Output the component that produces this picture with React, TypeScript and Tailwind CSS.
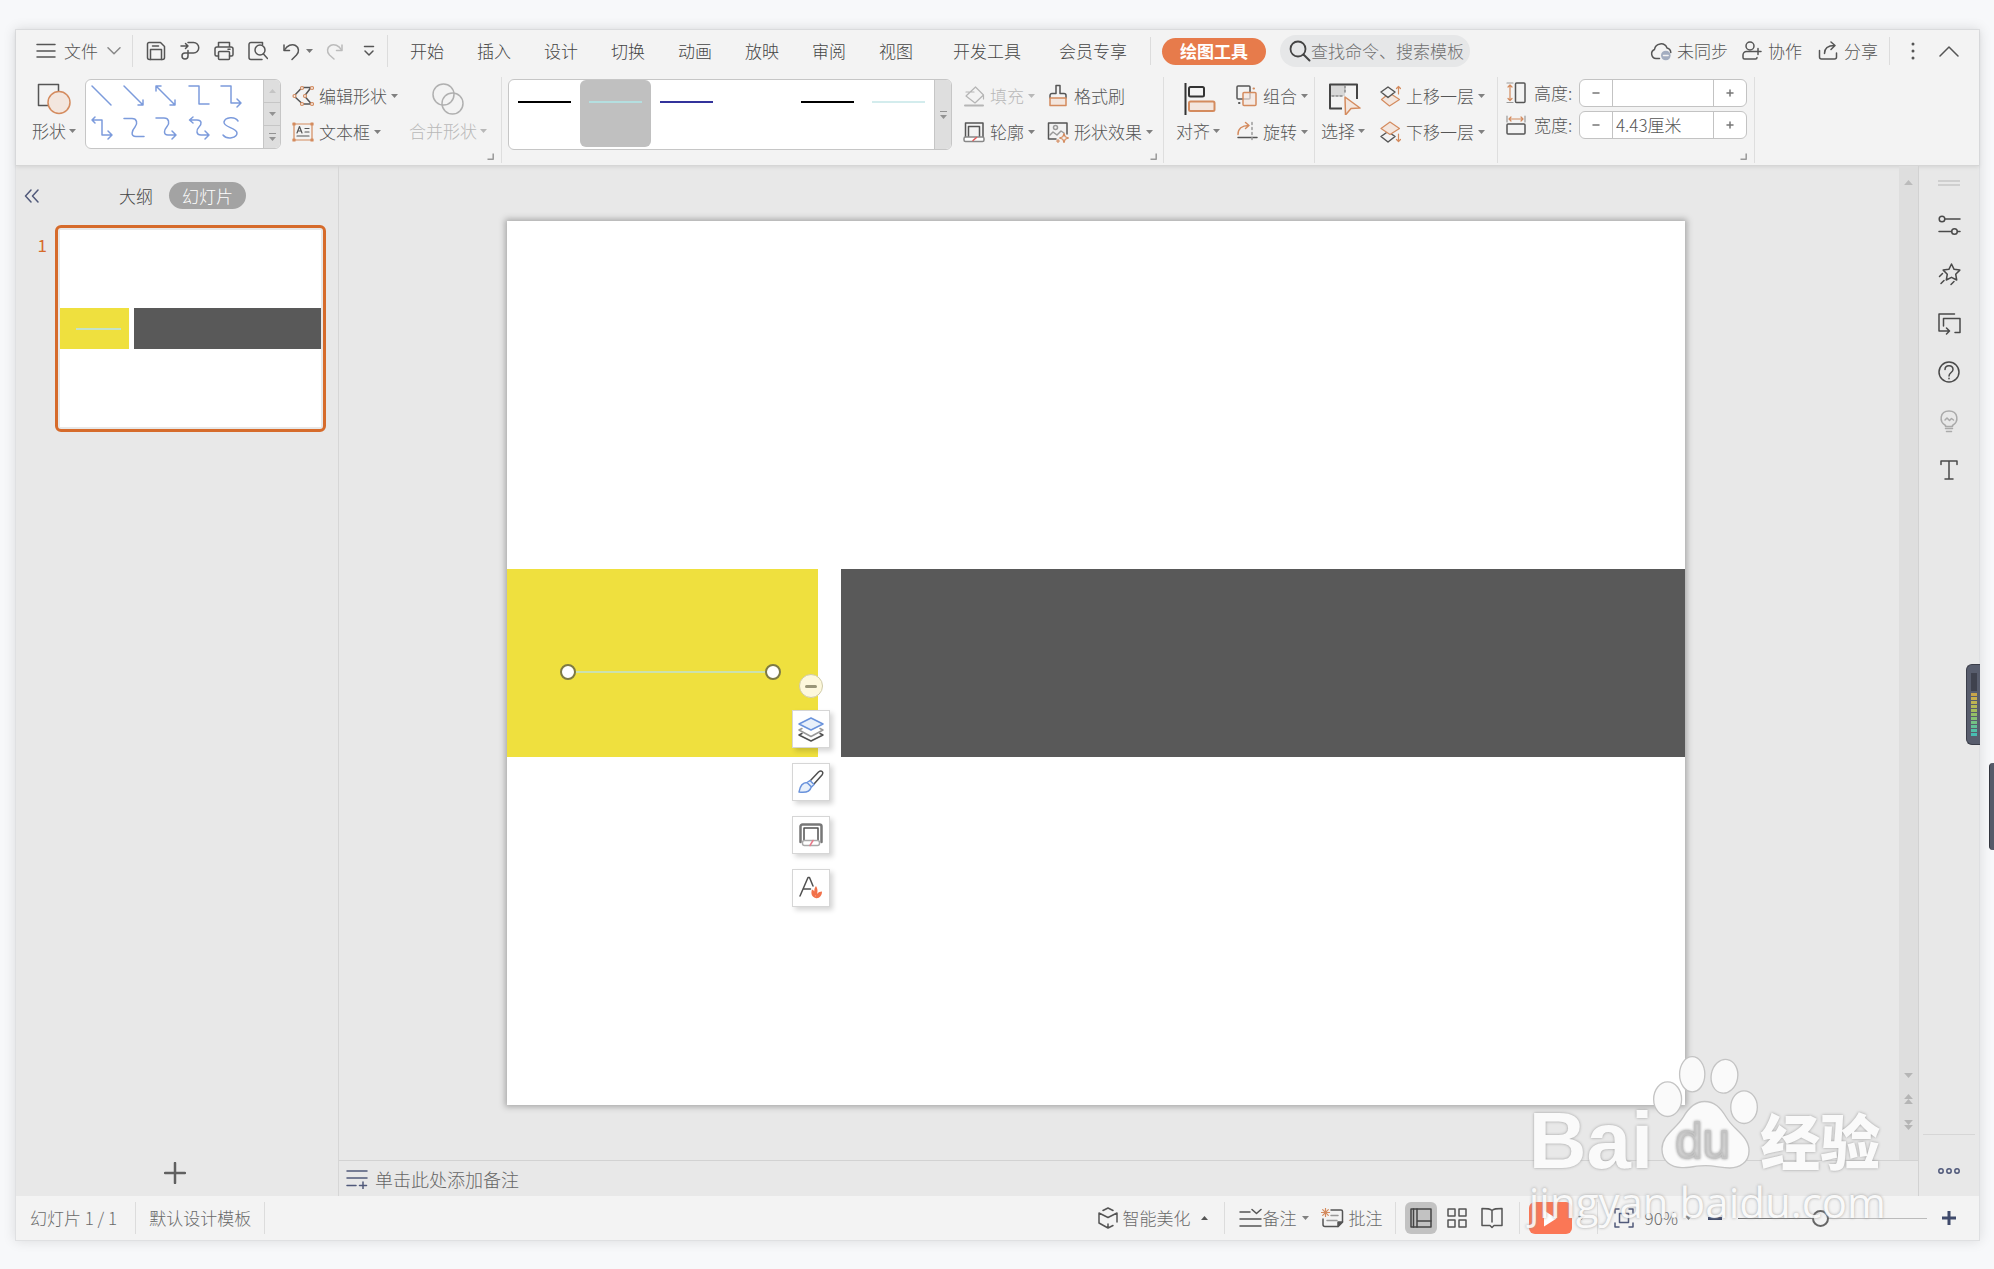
import type { ReactNode } from "react";

type IconProps = {
  w?: number;
  h?: number;
  className?: string;
  children: ReactNode;
};

function Icon({ w = 20, h = 20, className = "text-[#555]", children }: IconProps) {
  return (
    <svg
      width={w}
      height={h}
      viewBox={`0 0 ${w} ${h}`}
      fill="none"
      stroke="currentColor"
      strokeWidth="1.5"
      strokeLinecap="round"
      strokeLinejoin="round"
      className={`shrink-0 ${className}`}
      aria-hidden="true"
    >
      {children}
    </svg>
  );
}

function Caret({ className = "text-[#808080]" }: { className?: string }) {
  return (
    <svg width="7" height="4" viewBox="0 0 7 4" className={`shrink-0 ${className}`} aria-hidden="true">
      <path d="M0 0h7L3.5 4z" fill="currentColor" />
    </svg>
  );
}

function Launcher({ className }: { className: string }) {
  return (
    <button aria-label="更多设置" className={`mb-[5px] self-end ${className}`}>
      <Icon w={7} h={7} className="text-[#999]">
        <path d="M6.2 0.5v5.7H0.5" strokeLinecap="butt" />
      </Icon>
    </button>
  );
}

function RibbonDivider({ className }: { className: string }) {
  return <div className={`mt-[5px] h-[86px] w-px bg-[#dedede] ${className}`} />;
}

function SmallButton({ icon, label, caret = true, disabled = false }: { icon: ReactNode; label: string; caret?: boolean; disabled?: boolean }) {
  return (
    <button disabled={disabled} className={`flex h-9 items-center ${disabled ? "text-[#b8b8b8]" : ""}`}>
      {icon}
      <span className="ml-[5px]">{label}</span>
      {caret && <Caret className={disabled ? "ml-1 text-[#b8b8b8]" : "ml-1 text-[#808080]"} />}
    </button>
  );
}

function BigButton({ icon, label, className, disabled = false }: { icon: ReactNode; label: string; className: string; disabled?: boolean }) {
  return (
    <button disabled={disabled} className={`flex flex-col items-center gap-1 pt-[11px] ${disabled ? "text-[#b8b8b8]" : ""} ${className}`}>
      {icon}
      <span className="flex items-center gap-[3px]">
        {label}
        <Caret className={disabled ? "text-[#b8b8b8]" : "text-[#808080]"} />
      </span>
    </button>
  );
}

const quickActions = [
  {
    name: "保存",
    art: (
      <>
        <path d="M3 1.5h11.5l4 4V16.5a2 2 0 0 1-2 2h-13a2 2 0 0 1-2-2V3a1.5 1.5 0 0 1 1.5-1.5z" />
        <path d="M4.5 18.5V8.5h11v10M6.5 5h6" />
      </>
    ),
  },
  {
    name: "输出",
    art: (
      <>
        <path d="M1 5h7M5.5 2.5L8 5 5.5 7.5" />
        <path d="M8 1.5h5.5a5 5 0 0 1 0 10.5H5a3 3 0 1 0 3 3V9.5" />
      </>
    ),
  },
  {
    name: "打印",
    art: (
      <>
        <path d="M4.5 6V1.5h11V6M4.5 15H2.5a1.5 1.5 0 0 1-1.5-1.5V8a2 2 0 0 1 2-2h14a2 2 0 0 1 2 2v5.5a1.5 1.5 0 0 1-1.5 1.5h-2" />
        <rect x="4.5" y="10.5" width="11" height="8" rx="1" />
        <path d="M14 8.2h2" />
      </>
    ),
  },
  {
    name: "打印预览",
    art: (
      <>
        <path d="M14.5 3.5V1.5H3a2 2 0 0 0-2 2v13a2 2 0 0 0 2 2h11" />
        <circle cx="12" cy="9" r="5" />
        <path d="M15.5 13l4 4.5" />
      </>
    ),
  },
  {
    name: "撤销",
    art: (
      <>
        <path d="M2 4v5.5h5.5" />
        <path d="M2.5 9C5 4.5 10 2.5 13.5 4.5c3.5 2 4 6.5 1 9.5L10 18.5" />
      </>
    ),
  },
];

const tabs = ["开始", "插入", "设计", "切换", "动画", "放映", "审阅", "视图"];

function TitleBar() {
  return (
    <div className="flex h-[42px] items-center">
      <button className="ml-5 flex items-center">
        <Icon>
          <path d="M1 3.5h18M1 10h18M1 16h18" />
        </Icon>
        <span className="ml-2">文件</span>
        <Icon w={14} h={8} className="ml-[9px] text-[#888]">
          <path d="M1 0.8l6 6 6-6" />
        </Icon>
      </button>
      <div className="ml-[11px] h-8 w-px bg-[#dcdcdc]" />

      <div className="ml-[13px] flex items-center gap-[14px]">
        {quickActions.map((a) => (
          <button key={a.name} aria-label={a.name}>
            <Icon>{a.art}</Icon>
          </button>
        ))}
      </div>
      <Caret className="ml-1 text-[#777]" />
      <button aria-label="恢复" disabled className="ml-3">
        <Icon className="text-[#bbb]">
          <path d="M17 4v5.5h-5.5" />
          <path d="M16.5 9C14 4.5 9 2.5 5.5 4.5c-3.5 2-4 6.5-1 9.5L9 18" />
        </Icon>
      </button>
      <button aria-label="自定义快速访问" className="ml-[18px]">
        <Icon w={12} h={12}>
          <path d="M1.5 1.5h9M2 6l4 4 4-4" />
        </Icon>
      </button>
      <div className="ml-3 h-8 w-px bg-[#dcdcdc]" />

      <nav className="ml-[22px] flex items-center text-[#444]">
        <div className="flex gap-[33px]">
          {tabs.map((t) => (
            <button key={t}>{t}</button>
          ))}
        </div>
        <button className="ml-10">开发工具</button>
        <button className="ml-[38px]">会员专享</button>
        <div className="ml-[23px] h-7 w-px bg-[#dcdcdc]" />
        <button className="ml-[11px] h-[27px] rounded-full bg-[#e77b4b] px-[18px] font-bold text-white">绘图工具</button>
      </nav>

      <label className="ml-[14px] flex h-8 w-[190px] items-center rounded-full bg-[#e6e7e8] pl-[9px]">
        <Icon w={22} h={22} className="text-[#444]">
          <circle cx="9" cy="9" r="7.5" strokeWidth="1.8" />
          <path d="M14.5 14.5l6 6" strokeWidth="2" />
        </Icon>
        <input aria-label="查找命令" placeholder="查找命令、搜索模板" className="w-full min-w-0 bg-transparent outline-none placeholder:text-[#707070]" />
      </label>

      <div className="ml-auto flex items-center pr-5">
        <button className="flex items-center">
          <Icon w={22} h={20}>
            <path d="M9.5 17.5H6a4.7 4.7 0 0 1-1.5-9A6.5 6.5 0 0 1 17 7a5 5 0 0 1 3.8 4.5" />
            <circle cx="15.8" cy="14.5" r="4.8" fill="#a3adc0" stroke="none" />
            <path d="M13.5 14.5h4.6" stroke="#f3f3f3" />
          </Icon>
          <span className="ml-[5px]">未同步</span>
        </button>
        <button className="ml-[14px] flex items-center">
          <Icon>
            <circle cx="8" cy="5" r="4" />
            <path d="M13 10.5H4.5A3.5 3.5 0 0 0 1 14v2.5a1.5 1.5 0 0 0 1.5 1.5h11a1.5 1.5 0 0 0 1.5-1.5M16 7.5v6M13 10.5h6" />
          </Icon>
          <span className="ml-[6px]">协作</span>
        </button>
        <button className="ml-4 flex items-center">
          <Icon>
            <path d="M1.5 9.5V16a2 2 0 0 0 2 2h13a2 2 0 0 0 2-2v-4" />
            <path d="M6.5 12.5c0-5 3-8 10-8M13 1l4 3.5-4 4" />
          </Icon>
          <span className="ml-[6px]">分享</span>
        </button>
        <div className="ml-[11px] h-7 w-px bg-[#dcdcdc]" />
        <button aria-label="更多" className="ml-[21px]">
          <Icon w={4} h={20}>
            <g fill="currentColor" stroke="none">
              <circle cx="2" cy="3" r="1.5" />
              <circle cx="2" cy="10" r="1.5" />
              <circle cx="2" cy="17" r="1.5" />
            </g>
          </Icon>
        </button>
        <button aria-label="收起功能区" className="ml-6">
          <Icon w={20} h={12}>
            <path d="M1 11l9-9 9 9" />
          </Icon>
        </button>
      </div>
    </div>
  );
}

const connectors = [
  { name: "直线", d: "M1 1l19 19" },
  { name: "箭头", d: "M1 1l19 19M20 15v5h-5" },
  { name: "双箭头", d: "M1 1l19 19M20 15v5h-5M1 6V1h5" },
  { name: "肘形连接符", d: "M1 1h10v18h10" },
  { name: "肘形箭头", d: "M1 1h10v17h9M17 14l4 4-4 4" },
  { name: "肘形双箭头", d: "M1 3h10v15h9M17 14l4 4-4 4M4 0L1 3l3 3" },
  { name: "曲线", d: "M1 1.5h8c5 0 6 5 3 8.5S7 19.5 13 19.5h8" },
  { name: "曲线箭头", d: "M1 1h8c5 0 6 5 3 8.5S8 18 13 18h7M17 14l4 4-4 4" },
  { name: "曲线双箭头", d: "M2 3h7c5 0 5 4 2 7s-3 8 2 8h7M17 14l4 4-4 4M5 0L1.500 3 5 6" },
  { name: "自由曲线", d: "M18 4C15-1 5 0 4 5s13 6 13 11S7 23 3 18" },
];

const lineStyles = [
  { name: "黑色", line: "bg-black" },
  { name: "浅青", line: "bg-[#b4dfe0]", selected: true },
  { name: "蓝色", line: "bg-[#33339b]" },
  { name: "白色", line: "bg-white" },
  { name: "黑色细线", line: "bg-black" },
  { name: "淡青", line: "bg-[#d3eced]" },
];

const orange = "#d48b5e";
const peach = "#f3e6de";

function SizeField({ id, label, value, icon }: { id: string; label: string; value: string; icon: ReactNode }) {
  return (
    <div className="flex h-7 items-center">
      {icon}
      <label htmlFor={id} className="ml-2 w-[45px]">
        {label}
      </label>
      <div className="flex h-7 w-[168px] overflow-hidden rounded-md border border-[#c3c3c3] bg-white">
        <button aria-label="减小" className="flex w-8 items-center justify-center">
          <Icon w={8} h={8} className="text-[#777]">
            <path d="M1 4h6" />
          </Icon>
        </button>
        <input id={id} defaultValue={value} className="w-0 flex-1 border-x border-[#c3c3c3] px-[3px] outline-none" />
        <button aria-label="增大" className="flex w-8 items-center justify-center">
          <Icon w={8} h={8} className="text-[#777]">
            <path d="M1 4h6M4 1v6" />
          </Icon>
        </button>
      </div>
    </div>
  );
}

function Ribbon() {
  return (
    <div className="flex h-[93px] items-start">
      <BigButton
        label="形状"
        className="ml-4"
        icon={
          <Icon w={34} h={32}>
            <rect x="1.5" y="1.5" width="20" height="21" />
            <circle cx="22" cy="19.5" r="11" fill={peach} stroke={orange} />
          </Icon>
        }
      />
      <div className="mt-[7px] ml-[9px] flex h-[70px] w-[196px] overflow-hidden rounded-md border border-[#c6c6c6] bg-white">
        <div className="grid flex-1 grid-cols-5 place-items-center pr-4 pb-1 text-[#7c9bdc]">
          {connectors.map((c) => (
            <button key={c.name} aria-label={c.name}>
              <Icon w={22} h={22} className="overflow-visible">
                <path d={c.d} />
              </Icon>
            </button>
          ))}
        </div>
        <div className="flex w-[17px] flex-col divide-y divide-[#c6c6c6] border-l border-[#c6c6c6] bg-[#dedede]">
          <button aria-label="上一行" className="flex flex-1 items-center justify-center">
            <Caret className="rotate-180 text-[#c4c4c4]" />
          </button>
          <button aria-label="下一行" className="flex flex-1 items-center justify-center">
            <Caret className="text-[#929292]" />
          </button>
          <button aria-label="全部形状" className="flex flex-1 flex-col items-center justify-center gap-[3px]">
            <span className="h-px w-[7px] bg-[#929292]" />
            <Caret className="text-[#929292]" />
          </button>
        </div>
      </div>
      <div className="mt-[6px] ml-[11px] flex flex-col">
        <SmallButton
          label="编辑形状"
          icon={
            <Icon w={22} h={22}>
              <path d="M10 2.5h9l-6.5 8.5 7 8h-9L2 11z" />
              <g stroke={orange} fill="#f3f3f3" strokeWidth="1.2">
                <circle cx="10" cy="3" r="1.5" />
                <circle cx="20" cy="3" r="1.5" />
                <circle cx="2.5" cy="11" r="1.5" />
                <circle cx="13" cy="11" r="1.5" />
                <circle cx="10" cy="19" r="1.5" />
                <circle cx="20" cy="19" r="1.5" />
              </g>
            </Icon>
          }
        />
        <SmallButton
          label="文本框"
          icon={
            <Icon w={22} h={20}>
              <g stroke={orange} strokeWidth="1.2">
                <rect x="2" y="2" width="18" height="16" />
                <path d="M1 1h2v2H1zM19 1h2v2h-2zM1 17h2v2H1zM19 17h2v2h-2z" fill={orange} />
              </g>
              <path d="M5 11l2.500-6.500L10 11M6 9h3M13 6.500h4M13 10h4M5 14h12" strokeWidth="1.2" />
            </Icon>
          }
        />
      </div>
      <BigButton
        label="合并形状"
        disabled
        className="ml-[11px]"
        icon={
          <Icon w={32} h={32} className="text-[#b0b0b0]">
            <circle cx="11.5" cy="11.5" r="10.5" />
            <circle cx="20.5" cy="20.5" r="10.5" />
          </Icon>
        }
      />
      <Launcher className="" />
      <RibbonDivider className="ml-[7px]" />

      <div className="mt-[7px] ml-[6px] flex h-[71px] w-[444px] overflow-hidden rounded-md border border-[#c6c6c6] bg-white">
        <div className="grid flex-1 grid-cols-6">
          {lineStyles.map((s) => (
            <button
              key={s.name}
              aria-label={s.name}
              className={s.selected ? "mb-[2px] flex justify-center rounded-md bg-[#c0c0c0] pt-[21px]" : "mb-[2px] flex justify-center pt-[21px]"}
            >
              <span className={`h-[2px] w-[53px] ${s.line}`} />
            </button>
          ))}
        </div>
        <button aria-label="全部样式" className="flex w-[17px] flex-col items-center justify-center gap-[3px] border-l border-[#c6c6c6] bg-[#dedede]">
          <span className="h-px w-[7px] bg-[#929292]" />
          <Caret className="text-[#929292]" />
        </button>
      </div>
      <div className="mt-[6px] ml-[11px] flex gap-3">
        <div className="flex flex-col">
          <SmallButton
            label="填充"
            disabled
            icon={
              <Icon w={22} h={22} className="text-[#b5b5b5]">
                <path d="M3 11L12.500 2l8 8-8.500 8-9-7zM20.500 10v4M3 7h8" strokeWidth="1.2" />
                <path d="M2 20.500h18" strokeWidth="2" />
              </Icon>
            }
          />
          <SmallButton
            label="轮廓"
            icon={
              <Icon w={22} h={22}>
                <path d="M2.500 16V2h17.500v14M5.500 16V5.500h11V16" />
                <rect x="1" y="16" width="20" height="4.5" rx="1.5" stroke="#888" fill="#fff" />
                <path d="M10 19.500l3.500-3" stroke="#e05a5a" />
              </Icon>
            }
          />
        </div>
        <div className="flex flex-col">
          <SmallButton
            label="格式刷"
            caret={false}
            icon={
              <Icon w={22} h={24}>
                <path d="M3 14v-2.500a2 2 0 0 1 2-2h4V1.500h4v8h4a2 2 0 0 1 2 2V14" />
                <path d="M3 14h16v7.500H3z" fill={peach} stroke={orange} />
              </Icon>
            }
          />
          <SmallButton
            label="形状效果"
            icon={
              <Icon w={22} h={22}>
                <path d="M9 18H1.500V2h18.500v11" />
                <circle cx="8.5" cy="6.5" r="2" stroke="#999" />
                <path d="M3 14l3-3 4 3 4-4 3 2" stroke="#999" />
                <path d="M17 12.500l1.200 3.300 3.300 1.200-3.300 1.200L17 21.500l-1.200-3.300-3.300-1.200 3.300-1.200z" stroke={orange} strokeWidth="1.2" fill="#f3f3f3" />
                <path d="M11 18.500v3M9.500 20h3" stroke={orange} strokeWidth="1.2" />
              </Icon>
            }
          />
        </div>
      </div>
      <Launcher className="-ml-[3px]" />
      <RibbonDivider className="ml-[6px]" />

      <BigButton
        label="对齐"
        className="ml-3"
        icon={
          <Icon w={32} h={32} className="ml-1 text-[#333]">
            <path d="M1.500 0v32" strokeWidth="2" />
            <rect x="5" y="4" width="15" height="9.5" rx="1.5" strokeWidth="2" />
            <rect x="5" y="18.5" width="25.5" height="9.5" rx="1.5" stroke={orange} fill={peach} strokeWidth="2" />
          </Icon>
        }
      />
      <div className="mt-[6px] ml-4 flex flex-col">
        <SmallButton
          label="组合"
          icon={
            <Icon w={22} h={22}>
              <rect x="1" y="1" width="13" height="13" rx="1" />
              <rect x="7" y="7.5" width="13" height="13" rx="1" stroke={orange} fill={peach} fillOpacity="0.7" />
              <path d="M17.500 3.500h.5" stroke={orange} strokeWidth="2" />
              <path d="M3 18h.5" strokeWidth="2" />
            </Icon>
          }
        />
        <SmallButton
          label="旋转"
          icon={
            <Icon w={22} h={22}>
              <path d="M2 13.500C2 8 6 4.500 12.500 4.500M9.500 1.500l3.500 3-3.500 3" stroke={orange} />
              <path d="M2 16.500h19" />
              <path d="M16 1.500v19" strokeDasharray="2 3" stroke="#999" />
            </Icon>
          }
        />
      </div>
      <RibbonDivider className="ml-[6px]" />

      <BigButton
        label="选择"
        className="ml-[6px]"
        icon={
          <Icon w={34} h={32} className="ml-1 text-[#444]">
            <path d="M2 2h15v11H2z" fill="#d8d8d8" stroke="none" />
            <path d="M29 16V1.500H2v24h12" strokeWidth="2" strokeLinecap="butt" />
            <path d="M4 13h10M17 3v8" strokeDasharray="2 2" stroke="#888" />
            <path d="M17 14l15 11-9 .5L17.500 32z" fill={peach} stroke={orange} />
          </Icon>
        }
      />
      <div className="mt-[6px] ml-[14px] flex flex-col">
        <SmallButton
          label="上移一层"
          icon={
            <Icon w={22} h={22}>
              <path d="M2.500 14.500L10.500 8l10 6.500-10 6.500z" fill={peach} stroke={orange} strokeWidth="1.2" />
              <path d="M2 7l7-5 7 5-7 5.500z" fill="#f3f3f3" />
              <path d="M19.500 9V1.500M17.500 3.500l2-2 2 2" stroke={orange} strokeWidth="1.2" />
            </Icon>
          }
        />
        <SmallButton
          label="下移一层"
          icon={
            <Icon w={22} h={22}>
              <path d="M2 15.500l7-5 7 5-7 5.500z" />
              <path d="M2 7.500L11 1l9.500 6.500-9.500 6z" fill={peach} stroke={orange} strokeWidth="1.2" />
              <path d="M19.500 13v7.500M17.500 18.500l2 2 2-2" stroke={orange} strokeWidth="1.2" />
            </Icon>
          }
        />
      </div>
      <RibbonDivider className="ml-3" />

      <div className="mt-[7px] ml-2 flex flex-col gap-1">
        <SizeField
          id="shape-height"
          label="高度:"
          value=""
          icon={
            <Icon w={20} h={22}>
              <rect x="9.5" y="1" width="9.5" height="19.5" rx="1" />
              <path d="M4 3v15M2 5l2-2 2 2M2 16.500l2 2 2-2" stroke={orange} strokeWidth="1.2" />
              <path d="M1 1h6M1 20.500h6" stroke="#999" strokeWidth="1.2" />
            </Icon>
          }
        />
        <SizeField
          id="shape-width"
          label="宽度:"
          value="4.43厘米"
          icon={
            <Icon w={20} h={20}>
              <rect x="1" y="9" width="18" height="10" rx="1" />
              <path d="M3 4h14M5 2L3 4l2 2M15 2l2 2-2 2" stroke={orange} strokeWidth="1.2" />
              <path d="M1 1v6M19 1v6" stroke="#999" strokeWidth="1.2" />
            </Icon>
          }
        />
      </div>
      <Launcher className="-ml-[7px]" />
      <RibbonDivider className="ml-[7px]" />
    </div>
  );
}

function SlidePanel() {
  return (
    <aside className="flex w-[323px] shrink-0 flex-col border-r border-[#d6d6d6]">
      <div className="mt-4 flex h-[27px] items-center">
        <button aria-label="收起" className="ml-2">
          <Icon w={16} h={14} className="text-[#50597a]">
            <path d="M7 1L1.500 7 7 13M14 1L8.500 7l5.500 6" />
          </Icon>
        </button>
        <button className="ml-[79px] text-[#444]">大纲</button>
        <button className="ml-4 h-[27px] rounded-full bg-[#a3a3a3] px-[13px] text-white">幻灯片</button>
      </div>
      <div className="mt-4 flex pr-3">
        <span className="w-[39px] pt-2 pr-2 text-right font-normal text-[#d66b2b]">1</span>
        <button aria-label="幻灯片 1" className="flex h-[207px] flex-1 rounded-md border-[3px] border-[#d66b2b] bg-[#e8e8e8] p-[2px]">
          <span className="flex h-full w-full items-center bg-white">
            <span className="flex h-[41px] w-full justify-between">
              <span className="flex w-[26.4%] items-center justify-center bg-[#efe03e] pl-2">
                <span className="h-[2px] w-[45px] bg-[#c4e2c8]" />
              </span>
              <span className="w-[71.6%] bg-[#595959]" />
            </span>
          </span>
        </button>
      </div>
      <button aria-label="新建幻灯片" className="mt-auto mb-3 self-center pr-1">
        <Icon w={22} h={22} className="text-[#606060]">
          <path d="M1 11h20M11 1v20" strokeWidth="2.5" />
        </Icon>
      </button>
    </aside>
  );
}

const floatTools = [
  {
    name: "叠放层次",
    art: (
      <>
        <path d="M4 12.500L1 14l12 6.500L25 14l-3-1.500" stroke="#999" />
        <path d="M4 17.500L1 19l12 6 12-6-3-1.500" />
        <path d="M1 8l12-6 12 6-12 6z" fill="#e8f0fa" stroke="#6a93dc" />
      </>
    ),
  },
  {
    name: "形状样式",
    art: (
      <>
        <path d="M12.500 11.500l8-8.500c3-2.500 5.500 0 3.500 3l-8 9" />
        <path d="M1 23c1-6 4-9.500 8-9.500l3-2 4 4-3 3c-1 4-5 5.500-12 4.500zM9 13.500l4.500 4.500" fill="#e8f0fa" stroke="#6a93dc" />
      </>
    ),
  },
  {
    name: "形状轮廓",
    art: (
      <>
        <path d="M2.500 20V4.500a2 2 0 0 1 2-2h17a2 2 0 0 1 2 2V20" stroke="#777" strokeWidth="2.5" />
        <path d="M6 18V6h14v12" />
        <rect x="4.5" y="18.5" width="17" height="5" rx="2" stroke="#aaa" />
        <path d="M12 23.500l3-5" stroke="#e87a8a" />
      </>
    ),
  },
  {
    name: "文字美化",
    art: (
      <>
        <path d="M2 21L10 2.500h1.500L15 11M5.500 14h7" />
        <path d="M14 14.500c2.500 1 4 4 3.500 8.500-3.500-1-5-4.500-3.500-8.500zM18 11c2.500 4 1.500 8 0 10-2-3-2.500-7 0-10zM24 16.500c0 4.500-3 7.500-6.500 6.500 0-3 2.500-6.500 6.500-6.500z" fill="#f2714a" stroke="none" />
      </>
    ),
  },
];

function Canvas() {
  return (
    <main className="flex h-full min-w-0 flex-1 justify-center py-[55px] pr-[46px]">
      <div className="relative flex aspect-[4/3] h-full items-center bg-white shadow-[0_0_6px_2px_#a8a8a8]">
        <div className="flex h-[21.2%] w-full justify-between">
          <div className="w-[26.4%] bg-[#efe03e]" />
          <div className="w-[71.6%] bg-[#595959]" />
        </div>
        {/* selected line with its end handles */}
        <div className="absolute top-[50.1%] left-[4.5%] flex h-4 w-[18.8%] items-center">
          <span className="size-4 rounded-full border-2 border-[#7d7a45] bg-white" />
          <span className="h-[2px] flex-1 bg-[#cbe1ae]" />
          <span className="size-4 rounded-full border-2 border-[#7d7a45] bg-white" />
        </div>
        <div className="absolute top-[51.3%] left-[24.2%] flex flex-col items-center">
          <button aria-label="收起工具" className="mb-3 flex size-6 items-center justify-center rounded-full border border-[#cfcaa8] bg-[#fdf8dc]">
            <span className="h-[3px] w-3 rounded-full bg-[#9a9678]" />
          </button>
          <div className="flex flex-col gap-[15px]">
            {floatTools.map((t) => (
              <button key={t.name} aria-label={t.name} className="flex size-[38px] items-center justify-center border border-[#d6d6d6] bg-white shadow-[3px_3px_5px_#0000002b]">
                <Icon w={26} h={26} className="text-[#505050]">
                  {t.art}
                </Icon>
              </button>
            ))}
          </div>
        </div>
      </div>
    </main>
  );
}

function ScrollTrack() {
  return (
    <div className="flex w-5 flex-col items-center border-r border-[#d2d2d2] bg-[#dedede] pt-[14px] pb-[30px]">
      <Caret className="h-[5px] w-[9px] rotate-180 text-[#bbb]" />
      <div className="mt-auto flex flex-col items-center gap-4">
        <Caret className="h-[5px] w-[9px] text-[#b5b5b5]" />
        <div className="flex flex-col">
          <Caret className="h-[5px] w-[9px] rotate-180 text-[#b5b5b5]" />
          <Caret className="h-[5px] w-[9px] rotate-180 text-[#b5b5b5]" />
        </div>
        <div className="flex flex-col">
          <Caret className="h-[5px] w-[9px] text-[#b5b5b5]" />
          <Caret className="h-[5px] w-[9px] text-[#b5b5b5]" />
        </div>
      </div>
    </div>
  );
}

const sideTools = [
  {
    name: "属性",
    art: (
      <>
        <circle cx="4" cy="5" r="2.8" />
        <path d="M7 5h15M1 17.500h12.500M19.500 17.500H22" />
        <circle cx="16.5" cy="17.5" r="2.8" />
      </>
    ),
  },
  {
    name: "动画",
    art: (
      <>
        <path d="M13.500 1l2.600 5.300 5.700.8-4.100 4.100 1 5.800-5.200-2.700-5.200 2.700 1-5.800L5.200 7.100l5.700-.8z" />
        <path d="M4.500 10.500L1.500 13.500M6 17.500l-3 3M16 18.500l-3 3" />
      </>
    ),
  },
  {
    name: "切换",
    art: (
      <>
        <path d="M16.500 2H1v17h10M8.500 16l3 3-3 3" />
        <path d="M5.500 14V6.500H22V20.500h-5" />
      </>
    ),
  },
  {
    name: "帮助",
    art: (
      <>
        <circle cx="11" cy="11" r="10" />
        <path d="M7 8.500c0-5 8-5 8 0 0 3-4 3-4 6.500M11 17.200v.6" />
      </>
    ),
  },
  {
    name: "提示",
    dim: true,
    art: (
      <>
        <path d="M7.500 16.500v-1C1 12 1.500 1 11 1s10 11 3.500 14.500v1z" />
        <path d="M7 10l2-2 2.500 2.500 2-2 2 1.500M7.500 18.500h7M8.500 21.500h5" />
      </>
    ),
  },
  {
    name: "文字",
    art: <path d="M3 5.500V2h16v3.500M11 2v18M7 20h8" />,
  },
];

function SideBar() {
  return (
    <aside className="flex w-[60px] shrink-0 flex-col items-center">
      <div className="mt-[14px] h-[6px] w-[22px] border-y-2 border-[#cfcfcf]" />
      <div className="mt-7 flex flex-col gap-[26px]">
        {sideTools.map((t) => (
          <button key={t.name} aria-label={t.name}>
            <Icon w={23} h={23} className={t.dim ? "text-[#aaa]" : "text-[#4a4a4a]"}>
              {t.art}
            </Icon>
          </button>
        ))}
      </div>
      <div className="mt-auto h-px w-[52px] bg-[#d6d6d6]" />
      <button aria-label="更多面板" className="mt-8 mb-[21px]">
        <Icon w={24} h={8} className="text-[#50597a]">
          <circle cx="4" cy="4" r="2.2" />
          <circle cx="12" cy="4" r="2.2" />
          <circle cx="20" cy="4" r="2.2" />
        </Icon>
      </button>
    </aside>
  );
}

function StatusBar() {
  return (
    <footer className="flex h-11 shrink-0 items-center bg-[#f3f3f3] text-[#6a6a6a]">
      <span className="ml-[14px]">幻灯片 1 / 1</span>
      <div className="ml-[18px] h-8 w-px bg-[#dcdcdc]" />
      <span className="ml-[13px]">默认设计模板</span>
      <div className="ml-[13px] h-8 w-px bg-[#dcdcdc]" />

      <div className="ml-auto flex items-center pr-[23px]">
        <button className="flex items-center">
          <Icon w={20} h={22}>
            <path d="M5 3.500L10 1l5 2.500M1 6v10l9 5 5-2.500M1 6l9 4.500L19 6v9M10 21v-4" />
          </Icon>
          <span className="ml-[5px]">智能美化</span>
          <Caret className="ml-[10px] rotate-180 text-[#555]" />
        </button>
        <div className="ml-4 h-8 w-px bg-[#dcdcdc]" />
        <button className="ml-[14px] flex items-center">
          <Icon w={23} h={20}>
            <path d="M1 4h10M1 11h21M1 18h21M13 1.500l4.500 4L22 1.500" />
          </Icon>
          <span className="ml-px">备注</span>
          <Caret className="ml-[5px] text-[#808080]" />
        </button>
        <button className="ml-3 flex items-center">
          <Icon w={23} h={20}>
            <path d="M10 2h10a1.500 1.500 0 0 1 1.500 1.500V14L17 18.500H4a2 2 0 0 1-2-2V11" />
            <path d="M17 18.500V14h4.500z" fill="currentColor" />
            <path d="M10 7.500h7M6 12.500h10" stroke="#999" />
            <path d="M4.500 0.500v8M0.500 4.500h8M1.700 1.700l5.600 5.600M7.300 1.700L1.700 7.300" stroke={orange} strokeWidth="1.2" />
          </Icon>
          <span className="ml-[5px]">批注</span>
        </button>
        <div className="ml-3 h-8 w-px bg-[#dcdcdc]" />
        <button aria-label="普通视图" className="ml-[9px] flex size-8 items-center justify-center rounded-md bg-[#c2c2c2]">
          <Icon w={22} h={20} className="text-[#444]">
            <rect x="1" y="1" width="20" height="18" />
            <path d="M7 1v18M7 13h14M3.500 1v18" />
          </Icon>
        </button>
        <button aria-label="幻灯片浏览" className="ml-[10px]">
          <Icon>
            <path d="M1 1h7v7H1zM12 1h7v7h-7zM1 12h7v7H1zM12 12h7v7h-7z" />
          </Icon>
        </button>
        <button aria-label="阅读视图" className="ml-[14px]">
          <Icon w={22} h={22}>
            <path d="M11 3.500C9 1.500 7 1.500 1 1.500V18.500h8l2 2 2-2h8V1.500c-6 0-8 0-10 2zM11 3.500V15" />
          </Icon>
        </button>
        <div className="ml-4 h-8 w-px bg-[#dcdcdc]" />
        <button aria-label="放映" className="ml-[9px] flex h-8 w-[43px] items-center justify-center rounded-md bg-[#fb7756]">
          <svg width="14" height="17" viewBox="0 0 14 17" aria-hidden="true">
            <path d="M1 0.500l12.500 8-12.500 8z" fill="#fff" />
          </svg>
        </button>
        <Caret className="ml-[6px] text-[#808080]" />
        <div className="ml-3 h-8 w-px bg-[#dcdcdc]" />
        <button aria-label="适应窗口" className="ml-4">
          <Icon className="text-[#50597a]">
            <path d="M1 5V1h4M15 1h4v4M19 15v4h-4M5 19H1v-4" />
            <rect x="5.500" y="5.500" width="9" height="9" />
          </Icon>
        </button>
        <button className="ml-[11px] flex items-center">
          90%
          <Caret className="ml-[7px] text-[#808080]" />
        </button>
        <button aria-label="缩小" className="ml-4 h-[3px] w-[14px] bg-[#3f4a6b]" />
        <div className="ml-4 flex w-[189px] items-center">
          <input
            type="range"
            aria-label="缩放"
            min="0"
            max="100"
            defaultValue="43"
            className="h-px w-full appearance-none bg-linear-to-r from-[#777] from-43% to-[#bbb] to-43% [&::-webkit-slider-thumb]:size-[17px] [&::-webkit-slider-thumb]:appearance-none [&::-webkit-slider-thumb]:rounded-full [&::-webkit-slider-thumb]:border-2 [&::-webkit-slider-thumb]:border-[#666] [&::-webkit-slider-thumb]:bg-[#f3f3f3]"
          />
        </div>
        <button aria-label="放大" className="ml-[15px]">
          <Icon w={14} h={14} className="text-[#3f4a6b]">
            <path d="M0 7h14M7 0v14" strokeWidth="3" strokeLinecap="butt" />
          </Icon>
        </button>
      </div>
    </footer>
  );
}

const meterColors = ["#c9a54a", "#c8ae4c", "#bdb452", "#b3b956", "#a5bd5b", "#94bf66", "#86c173", "#74c184", "#62c196", "#52bfa6", "#47bdb2"];

function LevelMeter() {
  return (
    <>
      <div className="absolute top-[664px] right-[14px] flex h-[81px] w-[14px] flex-col items-center justify-center gap-px rounded-l-md border border-r-0 border-[#3b3e4a] bg-[#585d6d]">
        <div className="mb-px h-[18px] w-[6px] bg-[#3f424e]" />
        {meterColors.map((c) => (
          <span key={c} className="h-[3px] w-[6px]" style={{ backgroundColor: c }} />
        ))}
      </div>
      <div className="absolute top-[763px] right-0 h-[87px] w-[5px] rounded-l-sm border-l border-[#33363f] bg-[#555a69]" />
    </>
  );
}

function Watermark() {
  return (
    <div className="pointer-events-none absolute right-[108px] bottom-11 flex flex-col items-start text-[#fafafa] [text-shadow:0_0_3px_#999]">
      <div className="flex items-end">
        <span className="font-['Liberation_Sans'] text-[80px] leading-[76px] font-bold">Bai</span>
        <svg width="108" height="117" viewBox="450 75 325 350" className="-ml-px mb-2 shrink-0" aria-hidden="true">
          <g fill="#fafafa" stroke="#c4c4c4" strokeWidth="4">
            <ellipse cx="497" cy="210" rx="42" ry="52" />
            <ellipse cx="571" cy="135" rx="38" ry="53" />
            <ellipse cx="668" cy="141" rx="40" ry="51" transform="rotate(10 668 141)" />
            <ellipse cx="727" cy="234" rx="40" ry="49" />
            <path d="M608 217c30 0 48 18 66 48 22 38 68 56 68 100 0 36-30 52-58 52-26 0-44-7-72-7s-48 6-72 6c-34 0-60-20-60-56 0-42 42-60 64-96 16-28 34-47 64-47z" />
          </g>
          <text x="520" y="386" fontFamily="Liberation Sans" fontSize="148" fill="#dedede" stroke="#c4c4c4" strokeWidth="4">
            du
          </text>
        </svg>
        <span className="text-[60px] leading-[80px] font-black">经验</span>
      </div>
      <span className="font-['Open_Sans'] text-[42px] leading-[46px] font-normal opacity-90">jingyan.baidu.com</span>
    </div>
  );
}

export default function App() {
  return (
    <div className="relative flex h-screen flex-col overflow-hidden bg-[#f7f8fa] pt-[29px] pr-[14px] pb-7 pl-[15px] font-['Noto_Sans_CJK_SC',sans-serif] text-[17px] leading-6 font-light whitespace-nowrap text-[#555]">
      <div className="flex min-h-0 flex-1 flex-col border border-[#dfe0e2] bg-[#e8e8e8] shadow-[0_0_12px_#0000001f]">
        <header className="shrink-0 border-b border-[#d6d6d6] bg-[#f3f3f3] shadow-[0_1px_4px_#00000018]">
          <TitleBar />
          <Ribbon />
        </header>
        <div className="flex min-h-0 flex-1">
          <SlidePanel />
          <div className="flex min-w-0 flex-1 flex-col">
            <div className="flex min-h-0 flex-1">
              <Canvas />
              <ScrollTrack />
            </div>
            <label className="flex h-9 shrink-0 items-center border-t border-r border-[#d2d2d2] pl-[7px] text-lg">
              <Icon w={22} h={20} className="text-[#50597a]">
                <path d="M1 2h20M1 9h20M1 16.500h9M17 13v7M13.500 16.500h7" />
              </Icon>
              <input aria-label="备注" placeholder="单击此处添加备注" className="ml-[7px] flex-1 bg-transparent outline-none placeholder:text-[#666]" />
            </label>
          </div>
          <SideBar />
        </div>
        <StatusBar />
      </div>
      <LevelMeter />
      <Watermark />
    </div>
  );
}
